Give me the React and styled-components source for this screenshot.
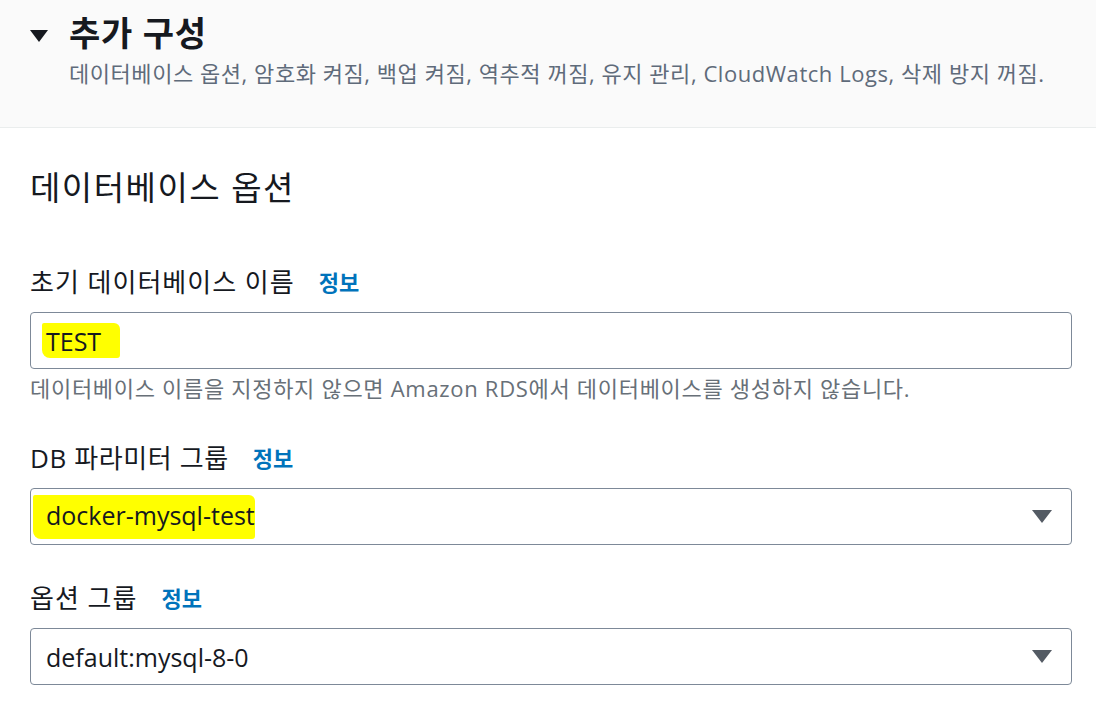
import styled, { createGlobalStyle } from "styled-components";

const GlobalStyle = createGlobalStyle`
    body {
        margin: 0;
        background: #ffffff;
        font-family: "Open Sans", "Noto Sans CJK KR", sans-serif;
        color: #16191f;
    }
`;

const Page = styled.div`
    width: 1096px;
    height: 713px;
    overflow: hidden;
`;

const Header = styled.div`
    background: #fafafa;
    border-bottom: 1px solid #eaeded;
    height: 128px;
    box-sizing: border-box;
    padding: 10px 30px 0 30px;
    display: flex;
    gap: 21px;
`;

const Caret = styled.span`
    margin-top: 20px;
    width: 0;
    height: 0;
    border-left: 9px solid transparent;
    border-right: 9px solid transparent;
    border-top: 12px solid #16191f;
`;

const HeaderText = styled.div`
    display: flex;
    flex-direction: column;
`;

const Title = styled.h2`
    margin: 0;
    font-size: 34px;
    font-weight: 700;
    letter-spacing: 0.8px;
    line-height: 46px;
`;

const Subtitle = styled.p`
    margin: 2px 0 0 0;
    font-size: 22px;
    letter-spacing: 0.55px;
    line-height: 30px;
    color: #5f6b7a;
`;

const Body = styled.div`
    padding: 36px 24px 0 30px;
`;

const SectionTitle = styled.h3`
    margin: 0 0 52px 0;
    font-size: 33px;
    letter-spacing: 1.5px;
    font-weight: 400;
    line-height: 48px;
`;

const Field = styled.div`
    margin-bottom: ${(p) => p.$after || "36px"};
`;

const Label = styled.div`
    display: flex;
    align-items: center;
    gap: 24px;
    font-size: 26px;
    letter-spacing: ${(p) => p.$spacing || "1px"};
    line-height: 36px;
    margin-bottom: 12px;
`;

const Info = styled.a`
    color: #0073bb;
    font-weight: 700;
    font-size: 22px;
    letter-spacing: 0;
    text-decoration: none;
`;

const Box = styled.div`
    height: 57px;
    box-sizing: border-box;
    border: 1.5px solid #7d8998;
    border-radius: 4px;
    display: flex;
    align-items: center;
    justify-content: space-between;
    padding: 0 19px 0 15px;
    font-size: 25px;
`;

const Marked = styled.span`
    background: #ffff00;
    padding: ${(p) => p.$pad};
    margin-left: ${(p) => p.$shift};
    border-radius: 2px 6px 3px 8px;
`;

const Arrow = styled.span`
    width: 0;
    height: 0;
    border-left: 10px solid transparent;
    border-right: 10px solid transparent;
    border-top: 13px solid #545b64;
`;

const Hint = styled.div`
    margin-top: 4px;
    font-size: 22px;
    letter-spacing: 0.7px;
    line-height: 30px;
    color: #687078;
`;

export default function App() {
    return (
        <Page>
            <GlobalStyle />
            <Header>
                <Caret />
                <HeaderText>
                    <Title>추가 구성</Title>
                    <Subtitle>
                        데이터베이스 옵션, 암호화 켜짐, 백업 켜짐, 역추적 꺼짐, 유지 관리, CloudWatch Logs, 삭제 방지 꺼짐.
                    </Subtitle>
                </HeaderText>
            </Header>
            <Body>
                <SectionTitle>데이터베이스 옵션</SectionTitle>
                <Field $after="37px">
                    <Label>
                        초기 데이터베이스 이름 <Info>정보</Info>
                    </Label>
                    <Box>
                        <Marked $pad="1px 19px 0 4px" $shift="-4px">TEST</Marked>
                    </Box>
                    <Hint>데이터베이스 이름을 지정하지 않으면 Amazon RDS에서 데이터베이스를 생성하지 않습니다.</Hint>
                </Field>
                <Field $after="35px">
                    <Label $spacing="0.6px">
                        DB 파라미터 그룹 <Info>정보</Info>
                    </Label>
                    <Box>
                        <Marked $pad="3px 0 7px 13px" $shift="-13px">docker-mysql-test</Marked>
                        <Arrow />
                    </Box>
                </Field>
                <Field>
                    <Label>
                        옵션 그룹 <Info>정보</Info>
                    </Label>
                    <Box>
                        default:mysql-8-0
                        <Arrow />
                    </Box>
                </Field>
            </Body>
        </Page>
    );
}
